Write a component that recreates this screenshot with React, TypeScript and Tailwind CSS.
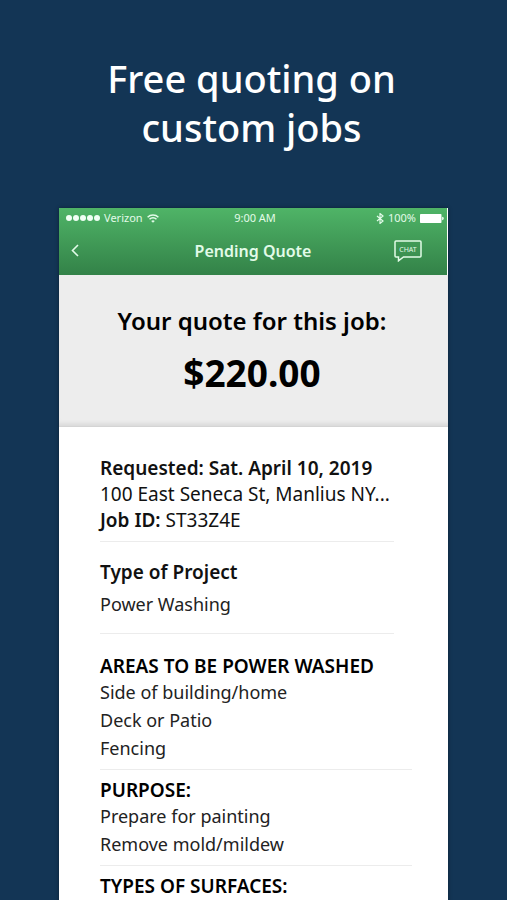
import React from 'react';

interface JobSection {
  title: string;
  items: string[];
}

const sections: JobSection[] = [
  { title: 'AREAS TO BE POWER WASHED', items: ['Side of building/home', 'Deck or Patio', 'Fencing'] },
  { title: 'PURPOSE:', items: ['Prepare for painting', 'Remove mold/mildew'] },
  { title: 'TYPES OF SURFACES:', items: [] },
];

const BackIcon = () => (
  <svg className="w-2 h-[13px]" viewBox="0 0 8 13" fill="none" stroke="currentColor" strokeWidth="1.6">
    <path d="M7 1 1.5 6.5 7 12" />
  </svg>
);

const WifiIcon = () => (
  <svg className="w-3 h-[9px]" viewBox="0 0 12 9" fill="none" stroke="currentColor" strokeWidth="1.5">
    <path d="M0.6 3.2a7.6 7.6 0 0 1 10.8 0" />
    <path d="M2.5 5.3a5 5 0 0 1 7 0" />
    <path d="M6 8.8 4.2 7a2.6 2.6 0 0 1 3.6 0z" fill="currentColor" stroke="none" />
  </svg>
);

const BluetoothIcon = () => (
  <svg className="w-2 h-[11px]" viewBox="0 0 8 11" fill="none" stroke="currentColor" strokeWidth="1.2">
    <path d="M1 3l6 5-3 2.5v-10L7 3 1 8" />
  </svg>
);

const BatteryIcon = () => (
  <svg className="w-6 h-[9px]" viewBox="0 0 24 9" fill="currentColor">
    <rect width="21.5" height="9" rx="0.8" />
    <path d="M22.2 2.8c2 .2 2 3.2 0 3.4z" />
  </svg>
);

const StatusBar = () => (
  <div className="grid grid-cols-[1fr_auto_1fr] items-center h-5 pl-[7px] pr-[3px] text-[11px] leading-5 text-[#e2fbe8]">
    <div className="flex items-center gap-1">
      <div className="flex">
        {[0, 1, 2, 3, 4].map((dot) => (
          <span key={dot} className="w-[6px] h-[6px] mr-px last:mr-0 rounded-full bg-[#f0fff4]" />
        ))}
      </div>
      <span>Verizon</span>
      <WifiIcon />
    </div>
    <span>9:00 AM</span>
    <div className="flex items-center justify-end gap-1">
      <BluetoothIcon />
      <span>100%</span>
      <span className="text-white">
        <BatteryIcon />
      </span>
    </div>
  </div>
);

const NavBar = () => (
  <div className="grid grid-cols-[1fr_auto_1fr] items-center h-[47px] pb-[2px] text-[#e2fbe8]">
    <button aria-label="Back" className="justify-self-start pl-3">
      <BackIcon />
    </button>
    <h2 className="text-[16px] leading-6 font-semibold">Pending Quote</h2>
    <button aria-label="Chat" className="justify-self-end pr-[25px]">
      <svg className="w-7 h-[22px]" viewBox="0 0 28 22" fill="none" stroke="currentColor" strokeWidth="1.5">
        <path d="M2 1h24a1 1 0 0 1 1 1v14a1 1 0 0 1-1 1H9.5L4.5 20.800V17H2a1 1 0 0 1-1-1V2a1 1 0 0 1 1-1z" />
        <text x="14" y="12" textAnchor="middle" fontSize="7" fill="currentColor" stroke="none">
          CHAT
        </text>
      </svg>
    </button>
  </div>
);

export default function App() {
  return (
    <main className="flex flex-col h-screen overflow-hidden bg-[#133555] px-[59px] font-['Noto_Sans','Open_Sans',sans-serif]">
      <h1 className="shrink-0 pt-[54px] pr-1 text-center text-[38px] leading-[49px] font-medium text-white">
        Free quoting on
        <br />
        custom jobs
      </h1>

      <div className="grow shrink-0 mt-[56px] bg-white shadow-[0_0_4px_rgba(0,0,0,0.4)]">
        <header className="mr-px bg-linear-to-b from-[#4fb467] to-[#338248]">
          <StatusBar />
          <NavBar />
        </header>

        <section className="h-[152px] pt-[30px] pr-[3px] text-center text-black bg-[#ededed] border-b border-[#d4d4d4] shadow-[inset_0_-5px_5px_-3px_rgba(0,0,0,0.1)]">
          <p className="text-[24px] leading-8 font-semibold">Your quote for this job:</p>
          <p className="mt-4 text-[37px] leading-10 font-bold">$220.00</p>
        </section>

        <section className="pl-[41px] pr-[36px] pt-7 text-[18px] leading-[26px] text-[#222]">
          <div className="mr-[18px] pb-2 border-b border-[#ececec] text-[19px] text-[#111]">
            <p className="font-semibold">Requested: Sat. April 10, 2019</p>
            <p className="whitespace-nowrap">100 East Seneca St, Manlius NY...</p>
            <p>
              <span className="font-semibold">Job ID:</span> ST33Z4E
            </p>
          </div>

          <div className="mr-[18px] pt-[17px] pb-4 border-b border-[#ececec]">
            <h3 className="text-[19px] font-semibold text-[#111]">Type of Project</h3>
            <p className="mt-[6px]">Power Washing</p>
          </div>

          <div className="pt-3">
            {sections.map((section) => (
              <div key={section.title} className="pt-[9px] pb-[7px] border-b border-[#ececec]">
                <h3 className="text-[19px] leading-[23px] font-semibold text-black">{section.title}</h3>
                {section.items.map((item) => (
                  <p key={item} className="leading-7">
                    {item}
                  </p>
                ))}
              </div>
            ))}
          </div>
        </section>
      </div>
    </main>
  );
}
